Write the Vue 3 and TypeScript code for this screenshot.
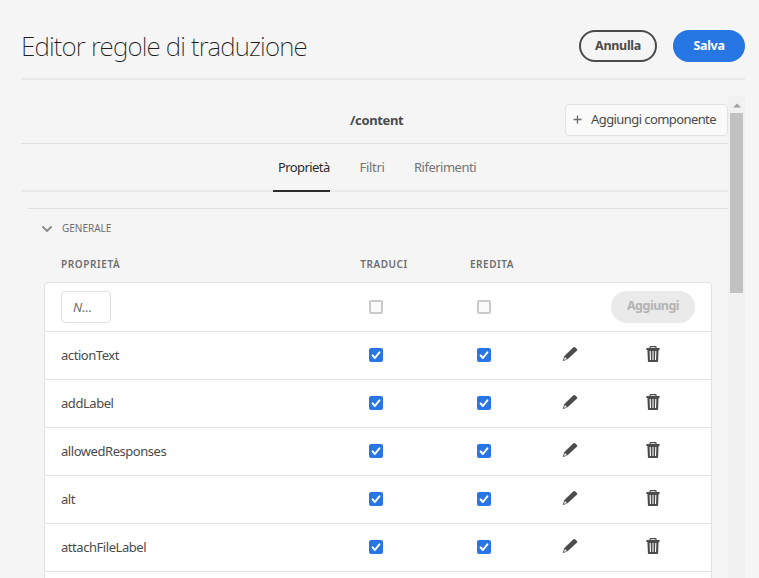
<script setup lang="ts">
interface Rule {
  name: string
  translate: boolean
  inherit: boolean
}

const tabs: string[] = ['Proprietà', 'Filtri', 'Riferimenti']
const rules: Rule[] = [
  { name: 'actionText', translate: true, inherit: true },
  { name: 'addLabel', translate: true, inherit: true },
  { name: 'allowedResponses', translate: true, inherit: true },
  { name: 'alt', translate: true, inherit: true },
  { name: 'attachFileLabel', translate: true, inherit: true },
]
</script>

<template>
  <div class="page">
    <header class="header">
      <h1>Editor regole di traduzione</h1>
      <button class="pill outline"><span>Annulla</span></button>
      <button class="pill primary"><span>Salva</span></button>
    </header>
    <div class="body">
      <main class="content">
        <div class="context">
          <strong>/content</strong>
          <button class="add-component">
            <svg width="9" height="9" viewBox="0 0 9 9"><path d="M4.5 .5v8M.5 4.5h8" stroke="#6e6e6e" stroke-width="1.4" fill="none" /></svg>
            <span>Aggiungi componente</span>
          </button>
        </div>
        <nav class="tabs">
          <a v-for="(tab, i) in tabs" :key="tab" :class="['tab', 'tab' + i, { active: i === 0 }]"><span>{{ tab }}</span></a>
        </nav>
        <section class="section">
          <div class="section-title">
            <svg width="10" height="8" viewBox="0 0 10 8"><path d="M1 2l4 4 4-4" fill="none" stroke="#8e8e8e" stroke-width="2" stroke-linecap="round" stroke-linejoin="round" /></svg>
            <span>GENERALE</span>
          </div>
          <div class="grid labels">
            <span class="l0">PROPRIETÀ</span><span class="l1">TRADUCI</span><span class="l2">EREDITA</span>
          </div>
          <div class="table">
            <div class="grid row new">
              <div class="input">N...</div>
              <i class="check" />
              <i class="check" />
              <span />
              <button class="pill disabled"><span>Aggiungi</span></button>
            </div>
            <div v-for="rule in rules" :key="rule.name" class="grid row">
              <span class="name">{{ rule.name }}</span>
              <i v-for="(on, k) in [rule.translate, rule.inherit]" :key="k" :class="['check', { on }]">
                <svg v-if="on" width="14" height="14" viewBox="0 0 14 14"><path d="M3.6 7.4l2.3 2.6 4.5-5.7" fill="none" stroke="#fff" stroke-width="2" stroke-linecap="round" stroke-linejoin="round" /></svg>
              </i>
              <svg class="icon" width="16" height="16" viewBox="0 0 16 16">
                <path d="M11.5 1.2Q12.2 .6 12.9 1.2L15 3.1Q15.6 3.8 15 4.5L5.9 13 .7 15.3 2.3 10.1Z" fill="#4b4b4b" />
                <path d="M3 11.1L4.8 12.9 2.5 13.8 2.1 13.5Z" fill="#fff" />
              </svg>
              <svg class="icon" width="14" height="16" viewBox="0 0 14 16">
                <path d="M4 2V1.3Q4 .7 4.6 .7h4.8q.6 0 .6 .6V2" fill="none" stroke="#4b4b4b" stroke-width="1.3" />
                <path d="M.4 2h13.2v2H12.6L12.1 15.2Q12 16 11.2 16H2.8Q2 16 1.9 15.2L1.4 4H.4Z" fill="#4b4b4b" />
                <path d="M4.2 5l.3 9M7 5v9M9.8 5l-.3 9" fill="none" stroke="#fff" stroke-width="1.1" />
              </svg>
            </div>
            <div class="row" />
          </div>
        </section>
      </main>
      <aside class="scrollbar">
        <svg width="8" height="5" viewBox="0 0 8 5"><path d="M0 4.5L4 .5l4 4z" fill="#a0a0a0" /></svg>
        <div class="thumb" />
      </aside>
    </div>
  </div>
</template>

<style>
body { background: #f5f5f5; overflow: hidden; }
</style>

<style scoped>
* { box-sizing: border-box; }
.page {
  width: 759px; height: 578px; overflow: hidden; padding: 0 14px 0 21px;
  display: flex; flex-direction: column;
  background: #f5f5f5; color: #4b4b4b;
  font: 13px/20px "Noto Sans", "Open Sans", sans-serif;
}
span, strong { white-space: nowrap; }
button { font: inherit; color: inherit; padding: 0; margin: 0; }
.header {
  flex: none; height: 80px; border-bottom: 2px solid #e9e9e9;
  display: flex; align-items: flex-start; gap: 16px; padding-top: 30px;
}
h1 { flex: 1; margin: 0; font-size: 26px; line-height: 32px; font-weight: 200; letter-spacing: -.82px; color: #1e1e1e; }
.pill {
  height: 32px; border-radius: 16px; border: 2px solid #4b4b4b; background: transparent;
  font-size: 12.5px; font-weight: 700; line-height: 20px; letter-spacing: -.3px;
  display: flex; align-items: center; justify-content: center;
}
.outline { width: 78px; }
.primary { width: 72px; color: #fff; background: #2676e4; border-color: #2676e4; }
.disabled { width: 84px; color: #b3b3b3; background: #eaeaea; border-color: #eaeaea; letter-spacing: -.5px; padding-bottom: 3px; }
.body { flex: 1; min-height: 0; display: flex; padding-top: 16px; }
.content { flex: 1; min-width: 0; }
.context {
  height: 48px; border-bottom: 1px solid #e1e1e1;
  display: grid; grid-template-columns: 329px 1fr 163px; align-items: center;
}
.context strong { grid-column: 2; letter-spacing: -.35px; }
.add-component {
  height: 32px; border: 1px solid #e1e1e1; border-radius: 4px; background: #fafafa;
  display: flex; align-items: center; padding: 0 0 2px 7px; gap: 9px; letter-spacing: -.58px;
}
.add-component svg { margin-top: 2px; }
.tabs { height: 48px; border-bottom: 2px solid #e9e9e9; display: flex; padding-left: 252px; }
.tab { height: 48px; padding: 13px 0 0 5px; color: #747474; }
.tab0 { width: 57px; margin-right: 24px; letter-spacing: -.58px; }
.tab1 { width: 54px; letter-spacing: -.3px; padding-left: 5.5px; }
.tab2 { padding-left: 6px; letter-spacing: -.5px; }
.active { color: #2c2c2c; border-bottom: 2px solid #2c2c2c; }
.section { margin: 16px 0 0 7px; border-top: 1px solid #e1e1e1; }
.section-title { height: 40px; display: flex; align-items: center; gap: 10px; padding-left: 14px; font-size: 10px; color: #6e6e6e; }
.section-title span { margin-bottom: 2px; }
.grid { display: grid; grid-template-columns: 277px 108px 108px 64px 102px; align-items: center; justify-items: center; }
.labels { margin-left: 17px; height: 33px; padding-bottom: 3px; font-size: 10px; font-weight: 600; letter-spacing: .55px; color: #6e6e6e; }
.l0 { justify-self: start; padding-left: 16px; letter-spacing: .6px; }
.l1, .l2 { padding-left: 16px; }
.table { width: 668px; margin-left: 16px; border: 1px solid #e1e1e1; border-radius: 4px 4px 0 0; background: #fff; }
.row { height: 48px; border-top: 1px solid #e1e1e1; padding-bottom: 1px; }
.row.new { border-top: 0; padding-bottom: 0; }
.input {
  justify-self: start; margin-left: 16px; width: 50px; height: 32px; padding: 5px 0 0 11px;
  border: 1px solid #e1e1e1; border-radius: 4px; font-style: italic; color: #6e6e6e;
}
.name { justify-self: start; padding-left: 16px; letter-spacing: -.45px; }
.check { width: 14px; height: 14px; border: 2px solid #cacaca; border-radius: 2px; background: #fafafa; }
.check.on { border: 0; background: #2676e4; }
.check svg { display: block; }
.icon { margin-bottom: 2px; }
.scrollbar { width: 17px; background: #f1f1f1; display: flex; flex-direction: column; align-items: center; }
.scrollbar svg { margin: 7px 0 5px; flex: none; }
.thumb { width: 13px; height: 180px; background: #c1c1c1; }
</style>
